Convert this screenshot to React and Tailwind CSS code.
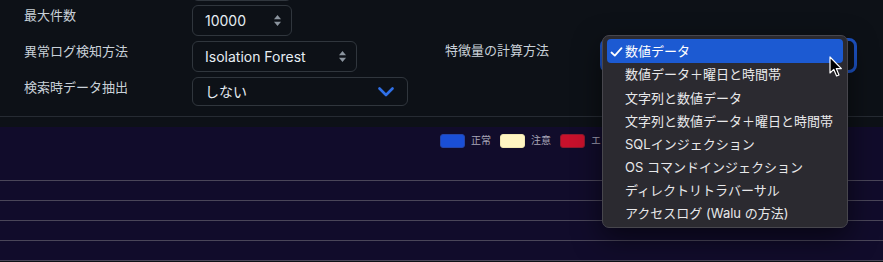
import React from 'react';

const MENU_ITEMS = [
  '数値データ',
  '数値データ＋曜日と時間帯',
  '文字列と数値データ',
  '文字列と数値データ＋曜日と時間帯',
  'SQLインジェクション',
  'OS コマンドインジェクション',
  'ディレクトリトラバーサル',
  'アクセスログ (Walu の方法)',
];

const LEGEND = [
  { label: '正常', swatch: 'bg-[#1a4fd6] border-[#2445a8]' },
  { label: '注意', swatch: 'bg-[#fff5c2] border-[#f0e6b0]' },
  { label: 'エラー', swatch: 'bg-[#c8112c] border-[#8e1a2c]' },
];

// small up/down arrows used by number inputs and native selects
const Stepper = () => (
  <svg width="9" height="13" viewBox="0 0 9 13" className="shrink-0">
    <path d="M4.5 1 L8 5.3 L1 5.3 Z" fill="#8b949e" />
    <path d="M4.5 12 L8 7.7 L1 7.7 Z" fill="#8b949e" />
  </svg>
);

const Chevron = () => (
  <svg width="16" height="10" viewBox="0 0 16 10" className="shrink-0">
    <path d="M1.5 1.5 L8 8 L14.5 1.5" fill="none" stroke="#2f6fe6" strokeWidth="2.6" strokeLinecap="round" strokeLinejoin="round" />
  </svg>
);

const Check = () => (
  <svg width="13" height="10" viewBox="0 0 13 10">
    <path d="M1.5 5.5 L4.8 8.6 L11.5 1.2" fill="none" stroke="#ffffff" strokeWidth="1.8" strokeLinecap="round" strokeLinejoin="round" />
  </svg>
);

const Cursor = () => (
  <svg width="14" height="22" viewBox="0 0 14 22">
    <path d="M1 1 L1 17 L4.8 13.4 L7.6 20 L10 19 L7.3 12.6 L12.4 12.6 Z" fill="#000" stroke="#fff" strokeWidth="1.2" strokeLinejoin="round" />
  </svg>
);

const FormRow = ({ label, children, className = '' }) => (
  <div className={`flex items-start ${className}`}>
    <span className="w-[168px] leading-5 text-[#c9d1d9]">{label}</span>
    {children}
  </div>
);

const App = () => {
  return (
    <div className="relative w-[883px] h-[262px] overflow-hidden bg-[#0d1117] text-[13px] font-['Inter','Noto_Sans_CJK_JP',sans-serif]">
      {/* Settings form */}
      <div className="h-[117px] flex border-b border-[#262b33]">
        <div className="w-[445px] pl-6 -mt-[31px] flex flex-col">
          <div className="ml-[168px] w-[100px] h-[32px] rounded-md border border-[#30363d]" />
          <FormRow label="最大件数" className="mt-[4px]">
            <div className="w-[100px] h-[31px] rounded-md border border-[#30363d] flex items-center justify-between pl-[12px] pr-[9px] text-[14px] text-[#e6edf3]">
              <span>10000</span>
              <Stepper />
            </div>
          </FormRow>
          <FormRow label="異常ログ検知方法" className="mt-[5px]">
            <div className="w-[165px] h-[31px] rounded-md border border-[#30363d] flex items-center justify-between pl-[12px] pr-[9px] text-[14px] text-[#e6edf3]">
              <span>Isolation Forest</span>
              <Stepper />
            </div>
          </FormRow>
          <FormRow label="検索時データ抽出" className="mt-[5px]">
            <div className="w-[216px] h-[29px] rounded-md border border-[#30363d] flex items-center justify-between pl-[12px] pr-[13px] text-[14px] text-[#e6edf3]">
              <span>しない</span>
              <Chevron />
            </div>
          </FormRow>
        </div>
        <div className="flex items-start pt-[38px]">
          <span className="w-[155px] pt-[2px] leading-5 text-[#c9d1d9]">特徴量の計算方法</span>
          <div className="w-[257px] h-[35px] rounded-lg border-[3px] border-[#1c52c4] bg-[#0d1117]" />
        </div>
      </div>
      <div className="h-[10px]" />

      {/* Chart area */}
      <div className="h-[134px] bg-[#110c2b]">
        <div className="flex items-center gap-[4px] pl-[440px] pt-[6px] text-[10px] text-[#a9a7b9]">
          {LEGEND.map((item) => (
            <div key={item.label} className="flex items-center gap-[6px] mr-[5px]">
              <span className={`w-[25px] h-[14px] rounded-[3px] border ${item.swatch}`} />
              <span>{item.label}</span>
            </div>
          ))}
        </div>
        <div className="mt-[32px] flex flex-col gap-[19px]">
          {[0, 1, 2, 3, 4].map((i) => (
            <div key={i} className="h-px bg-[#4a4659]" />
          ))}
        </div>
      </div>

      {/* Open select menu */}
      <div className="absolute left-[602px] top-[35px] w-[246px] h-[193px] rounded-[7px] bg-[#2b2a30] border border-[#47464d] shadow-[0_10px_28px_rgba(0,0,0,0.55)] px-[4px] pt-[3px]">
        {MENU_ITEMS.map((item, i) => (
          <div
            key={item}
            className={`flex items-center rounded-[4px] text-[13px] ${
              i === 0 ? 'h-[24px] pt-[1px] bg-[#1c5ad2] text-white' : 'h-[23.2px] pt-[1px] text-[#e8e8ea]'
            }`}
          >
            <span className="w-[18px] pl-[3px] flex items-center">{i === 0 && <Check />}</span>
            <span>{item}</span>
          </div>
        ))}
      </div>

      <div className="absolute left-[829px] top-[56px]">
        <Cursor />
      </div>
    </div>
  );
};

export default App;
